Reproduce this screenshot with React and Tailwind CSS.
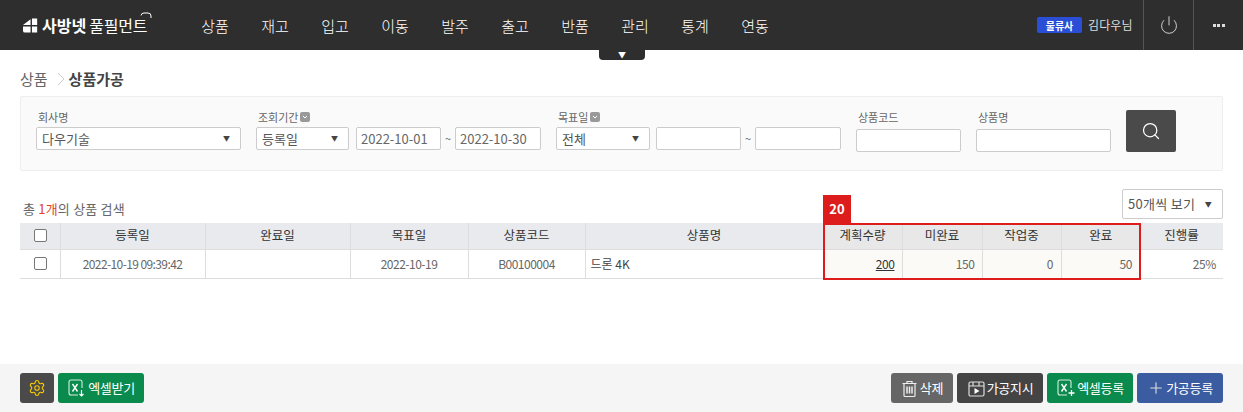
import React from "react";
import { Power, Search, Settings, Plus } from "lucide-react";

const menus = ["상품", "재고", "입고", "이동", "발주", "출고", "반품", "관리", "통계", "연동"];

const SelectBox = ({ text, className }) => (
  <div className={`flex h-[23px] items-center justify-between rounded-[2px] border border-[#ccc] bg-white pl-[5px] pr-[10px] text-[13px] text-[#555] ${className}`}>
    <span>{text}</span>
    <span className="text-[7px] text-[#444]">▼</span>
  </div>
);

const TextBox = ({ value, className }) => (
  <input
    readOnly
    value={value || ""}
    className={`h-[23px] rounded-[2px] border border-[#ccc] bg-white px-[4px] text-[13px] text-[#666] outline-none ${className}`}
  />
);

const Label = ({ text, badge, className }) => (
  <div className={`mb-[2px] flex h-[16px] items-center gap-[2px] text-[11px] text-[#666] ${className || ""}`}>
    {text}
    {badge && (
      <span className="flex h-[10px] w-[10px] items-center justify-center rounded-[2px] bg-[#999]">
        <svg width="6" height="4" viewBox="0 0 6 4" fill="none" stroke="#fff"><path d="M1 1l2 2 2-2" /></svg>
      </span>
    )}
  </div>
);

const ExcelIcon = ({ plus }) => (
  <svg width="20" height="20" viewBox="0 0 20 20" fill="none" stroke="#d8eee2" strokeWidth="1.100">
    <path d="M11 17H4a2 2 0 0 1-2-2V4a2 2 0 0 1 2-2h9a2 2 0 0 1 2 2v6" />
    <path d="M5.500 6l5 7.500M10.500 6l-5 7.500" stroke="#fff" strokeWidth="1.400" />
    {plus ? (
      <path d="M15.500 12v6M12.500 15h6" stroke="#fff" strokeWidth="1.300" />
    ) : (
      <path d="M14.500 12v6M12.500 16l2 2 2-2" stroke="#fff" strokeWidth="1.200" />
    )}
  </svg>
);

const PlayBoxIcon = () => (
  <svg width="19" height="19" viewBox="0 0 19 19" fill="none" stroke="#ddd" strokeWidth="1.200">
    <rect x="2" y="3" width="15" height="14" rx="1.500" />
    <path d="M2 7h15M6 3v4M12 3v4" />
    <path d="M7.500 9v6l5-3z" fill="#fff" stroke="none" />
  </svg>
);

const TrashIcon = () => (
  <svg width="17" height="19" viewBox="0 0 17 19" fill="none" stroke="#eee" strokeWidth="1.200" className="mr-[1px]">
    <path d="M1.500 4.500h14M6 4.500V2.500h5v2M3 4.500v12a1 1 0 0 0 1 1h9a1 1 0 0 0 1-1v-12" />
    <path d="M6 7.500v7M8.500 7.500v7M11 7.500v7" strokeWidth="1.500" />
  </svg>
);

const ActionButton = ({ bg, className, children }) => (
  <button className={`flex h-[30px] items-center justify-center gap-[1px] rounded-[3px] text-[13px] tracking-[-0.300px] text-white ${bg} ${className}`}>
    {children}
  </button>
);

const CheckBox = () => (
  <input type="checkbox" readOnly className="ml-[1px] block h-[13px] w-[13px] appearance-none rounded-[2px] border border-[#777] bg-white" />
);

export default function App() {
  return (
    <div className="relative flex h-screen flex-col overflow-hidden bg-white font-['Noto_Sans_CJK_KR','Noto_Sans',sans-serif]">
      <header className="flex h-[50px] shrink-0 items-center bg-[#2e2e2e] pl-[23px] text-white">
        <div className="flex w-[176px] items-center">
          <svg width="17" height="15" viewBox="0 0 18 15" fill="#fff" className="mr-[2px]">
            <path d="M0 7 8 1v6H0zM9.500 0H15v7H9.500zM0 8.500h8V15H2a2 2 0 0 1-2-2zM9.500 8.500H15V15H9.500z" />
          </svg>
          <span className="text-[16px] font-bold leading-none">사방넷</span>
          <span className="relative ml-[3px] text-[16px] font-normal leading-none tracking-[-0.200px]">
            풀필먼트
            <svg width="12" height="7" viewBox="0 0 12 7" fill="none" stroke="#fff" className="absolute -right-[5px] -top-[5px]">
              <path d="M1 3.500A3 3 0 0 1 4 1h4a3 3 0 0 1 3 3v2" />
            </svg>
          </span>
        </div>
        <nav className="flex gap-[28px]">
          {menus.map((m) => (
            <span key={m} className="w-[32px] text-center text-[15px] font-light leading-none text-white">{m}</span>
          ))}
        </nav>
        <div className="ml-auto flex h-full items-center">
          <span className="flex h-[16px] w-[45px] items-center justify-center rounded-[2px] bg-[#2a4fd6] text-[10px] font-bold text-white">물류사</span>
          <span className="ml-[6px] mr-[10px] w-[45px] text-[12px] tracking-[0.100px] text-[#ddd]">김다우님</span>
          <div className="flex h-full w-[50px] items-center justify-center border-l border-[#555]">
            <Power size={20} strokeWidth={1.100} className="text-[#ddd]" />
          </div>
          <div className="flex h-full w-[50px] items-center justify-center gap-[1.500px] border-l border-[#555]">
            <span className="h-[3px] w-[3px] bg-[#ddd]"></span>
            <span className="h-[3px] w-[3px] bg-[#ddd]"></span>
            <span className="h-[3px] w-[3px] bg-[#ddd]"></span>
          </div>
        </div>
      </header>

      <div className="absolute left-[599px] top-[50px] flex h-[10px] w-[46px] items-center justify-center rounded-b-[4px] bg-[#2e2e2e] text-[8px] leading-none text-white">▼</div>

      <div className="flex items-center px-[20px] pt-[19px] text-[15px] leading-[20px]">
        <span className="text-[#666]">상품</span>
        <svg width="8" height="14" viewBox="0 0 8 14" fill="none" stroke="#ccc" className="ml-[9px] mr-[4px]"><path d="M1 1l6 6-6 6" /></svg>
        <span className="font-bold text-[#444]">상품가공</span>
      </div>

      <div className="mx-[20px] mt-[7px] flex h-[75px] shrink-0 rounded-[2px] border border-[#eee] bg-[#fafafa] pl-[15px] pt-[12px]">
        <div className="w-[220px]">
          <Label text="회사명" className="pl-[2px]" />
          <SelectBox text="다우기술" className="w-[205px]" />
        </div>
        <div className="w-[300px]">
          <Label text="조회기간" badge className="pl-[2px]" />
          <div className="flex items-center">
            <SelectBox text="등록일" className="w-[93px]" />
            <TextBox value="2022-10-01" className="ml-[7px] w-[85px]" />
            <span className="w-[14px] text-center text-[11px] text-[#666]">~</span>
            <TextBox value="2022-10-30" className="w-[86px]" />
          </div>
        </div>
        <div className="w-[300px]">
          <Label text="목표일" badge className="pl-[2px]" />
          <div className="flex items-center">
            <SelectBox text="전체" className="w-[94px]" />
            <TextBox className="ml-[6px] w-[85px]" />
            <span className="w-[14px] text-center text-[11px] text-[#666]">~</span>
            <TextBox className="w-[86px]" />
          </div>
        </div>
        <div className="w-[120px]">
          <Label text="상품코드" className="pl-[2px]" />
          <TextBox className="w-[105px]" />
        </div>
        <div className="w-[150px]">
          <Label text="상품명" className="pl-[2px]" />
          <TextBox className="w-[135px]" />
        </div>
        <button className="mt-[1px] flex h-[42px] w-[50px] items-center justify-center rounded-[2px] bg-[#4a4a4a]">
          <Search size={20} strokeWidth={1.500} className="text-white" />
        </button>
      </div>

      <div className="relative mx-[20px] mt-[17px]">
        <div className="flex h-[35px] items-start justify-between">
          <div className="pl-[3px] pt-[12px] text-[13px] leading-[18px] tracking-[0.200px] text-[#666]">
            총 <span className="text-[#e2421f]">1개</span>의 상품 검색
          </div>
          <SelectBox text="50개씩 보기" className="mt-[1px] h-[30px] w-[101px] text-[12px] tracking-[0.300px]" />
        </div>

        <table className="w-full table-fixed border-collapse text-[12.500px]">
          <colgroup>
            <col className="w-[40px]" />
            <col className="w-[145px]" />
            <col className="w-[145px]" />
            <col className="w-[118px]" />
            <col className="w-[117px]" />
            <col className="w-[238px]" />
            <col className="w-[79px]" />
            <col className="w-[80px]" />
            <col className="w-[79px]" />
            <col className="w-[79px]" />
            <col className="w-[83px]" />
          </colgroup>
          <thead>
            <tr className="h-[26px] bg-[#e9eaee] text-[#333]">
              <th className="border-b border-r border-[#ddd] font-normal"><div className="flex justify-center"><CheckBox /></div></th>
              <th className="border-b border-r border-[#ddd] font-normal">등록일</th>
              <th className="border-b border-r border-[#ddd] font-normal">완료일</th>
              <th className="border-b border-r border-[#ddd] font-normal">목표일</th>
              <th className="border-b border-r border-[#ddd] font-normal">상품코드</th>
              <th className="border-b border-r border-[#ddd] font-normal">상품명</th>
              <th className="border-b border-r border-[#ddd] bg-[#e8e8e8] font-normal">계획수량</th>
              <th className="border-b border-r border-[#ddd] bg-[#e8e8e8] font-normal">미완료</th>
              <th className="border-b border-r border-[#ddd] bg-[#e8e8e8] font-normal">작업중</th>
              <th className="border-b border-[#ddd] bg-[#e8e8e8] font-normal">완료</th>
              <th className="border-b border-[#ddd] font-normal">진행률</th>
            </tr>
          </thead>
          <tbody>
            <tr className="h-[29px] text-[12px] text-[#666]">
              <td className="border-b border-r border-[#ddd]"><div className="flex justify-center"><CheckBox /></div></td>
              <td className="border-b border-r border-[#ddd] text-center tracking-[-0.600px]">2022-10-19 09:39:42</td>
              <td className="border-b border-r border-[#ddd]"></td>
              <td className="border-b border-r border-[#ddd] text-center tracking-[-0.500px]">2022-10-19</td>
              <td className="border-b border-r border-[#ddd] text-center tracking-[-0.500px]">B00100004</td>
              <td className="border-b border-r border-[#ddd] px-[5px] text-[#444]">드론 4K</td>
              <td className="border-b border-r border-[#ddd] bg-[#fbfaf6] px-[7px] text-right tracking-[-0.400px] text-[#333] underline">200</td>
              <td className="border-b border-r border-[#ddd] bg-[#fbfaf6] px-[7px] text-right tracking-[-0.400px]">150</td>
              <td className="border-b border-r border-[#ddd] bg-[#fbfaf6] px-[7px] text-right">0</td>
              <td className="border-b border-[#ddd] bg-[#fbfaf6] px-[8px] text-right tracking-[-0.400px]">50</td>
              <td className="border-b border-[#ddd] px-[7px] text-right tracking-[-0.400px]">25%</td>
            </tr>
          </tbody>
        </table>

        <div className="pointer-events-none absolute left-[803px] top-[35px] h-[57px] w-[318px] border-2 border-[#dd1c1c]"></div>
        <div className="absolute left-[803px] top-[7px] flex h-[28px] w-[28px] items-center justify-center bg-[#dd1c1c] text-[13px] font-bold text-white">20</div>
      </div>

      <footer className="mt-auto flex h-[48px] shrink-0 items-center bg-[#f5f5f5] px-[20px]">
        <ActionButton bg="bg-[#4a4a4a]" className="w-[34px]">
          <Settings size={18} strokeWidth={1.500} className="text-[#f5c800]" />
        </ActionButton>
        <ActionButton bg="bg-[#0b8a4d]" className="ml-[4px] w-[86px]">
          <ExcelIcon />엑셀받기
        </ActionButton>
        <div className="ml-auto flex gap-[4px]">
          <ActionButton bg="bg-[#666]" className="w-[62px]">
            <TrashIcon />삭제
          </ActionButton>
          <ActionButton bg="bg-[#444]" className="w-[86px]">
            <PlayBoxIcon />가공지시
          </ActionButton>
          <ActionButton bg="bg-[#0b8a4d]" className="w-[86px]">
            <ExcelIcon plus />엑셀등록
          </ActionButton>
          <ActionButton bg="bg-[#3b5ca1]" className="w-[86px]">
            <Plus size={18} strokeWidth={1.500} className="text-[#ddd]" />가공등록
          </ActionButton>
        </div>
      </footer>
    </div>
  );
}
